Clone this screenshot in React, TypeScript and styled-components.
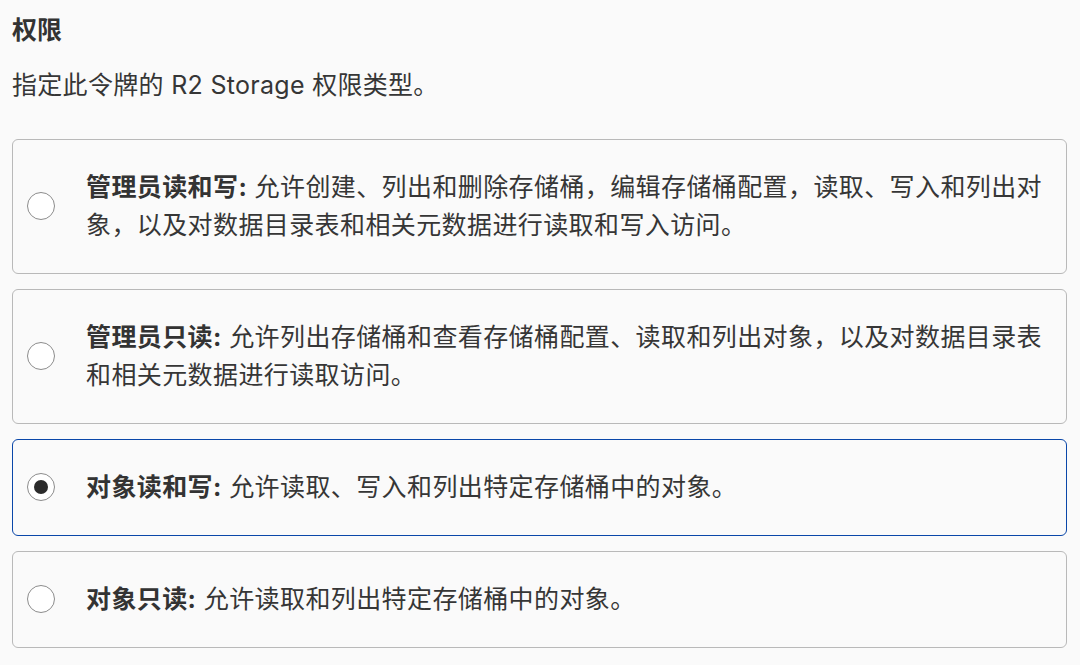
import React, { useState } from "react";
import styled, { createGlobalStyle } from "styled-components";

const GlobalStyle = createGlobalStyle`
  html, body {
    margin: 0;
    padding: 0;
    background: #fafafa;
  }
  body {
    font-family: Inter, "Noto Sans CJK SC", "Noto Sans", sans-serif;
    color: #363636;
  }
`;

const Page = styled.div`
  padding: 11px 13px 0 12px;
  display: flex;
  flex-direction: column;
`;

const Title = styled.h2`
  margin: 0;
  font-size: 25px;
  line-height: 38px;
  font-weight: 700;
  color: #333333;
`;

const Description = styled.p`
  margin: 17px 0 0;
  font-size: 25px;
  line-height: 38px;
  letter-spacing: 0.3px;
  color: #363636;
`;

const Options = styled.div`
  margin-top: 35px;
  display: flex;
  flex-direction: column;
  gap: 15px;
`;

const Card = styled.label<{ $selected: boolean }>`
  display: flex;
  align-items: center;
  gap: 31px;
  padding: 28px 20px 29px 14px;
  border: 1px solid ${(p) => (p.$selected ? "#0a47a9" : "#b9b9b9")};
  border-radius: 6px;
  background: #fafafa;
  cursor: pointer;
`;

const Radio = styled.span<{ $checked: boolean }>`
  flex: none;
  width: 28px;
  height: 28px;
  box-sizing: border-box;
  border-radius: 50%;
  border: 1.5px solid #8c8c8c;
  background: #ffffff;
  display: flex;
  align-items: center;
  justify-content: center;

  &::after {
    content: "";
    width: 14px;
    height: 14px;
    border-radius: 50%;
    background: #2b2b2b;
    display: ${(p) => (p.$checked ? "block" : "none")};
  }
`;

const HiddenInput = styled.input`
  position: absolute;
  opacity: 0;
  width: 0;
  height: 0;
`;

const Text = styled.span`
  flex: 1;
  font-size: 25px;
  line-height: 38px;
  letter-spacing: 0.4px;
  color: #363636;
`;

const Label = styled.strong`
  font-weight: 700;
  color: #333333;
`;

const options = [
  {
    id: "admin-rw",
    label: "管理员读和写:",
    desc: "允许创建、列出和删除存储桶，编辑存储桶配置，读取、写入和列出对象，以及对数据目录表和相关元数据进行读取和写入访问。",
  },
  {
    id: "admin-r",
    label: "管理员只读:",
    desc: "允许列出存储桶和查看存储桶配置、读取和列出对象，以及对数据目录表和相关元数据进行读取访问。",
  },
  {
    id: "object-rw",
    label: "对象读和写:",
    desc: "允许读取、写入和列出特定存储桶中的对象。",
  },
  {
    id: "object-r",
    label: "对象只读:",
    desc: "允许读取和列出特定存储桶中的对象。",
  },
];

export default function App() {
  const [value, setValue] = useState("object-rw");
  return (
    <>
      <GlobalStyle />
      <Page>
        <Title>权限</Title>
        <Description>指定此令牌的 R2 Storage 权限类型。</Description>
        <Options>
          {options.map((o) => (
            <Card key={o.id} $selected={value === o.id}>
              <HiddenInput
                type="radio"
                name="perm"
                checked={value === o.id}
                onChange={() => setValue(o.id)}
              />
              <Radio $checked={value === o.id} />
              <Text>
                <Label>{o.label}</Label> {o.desc}
              </Text>
            </Card>
          ))}
        </Options>
      </Page>
    </>
  );
}
